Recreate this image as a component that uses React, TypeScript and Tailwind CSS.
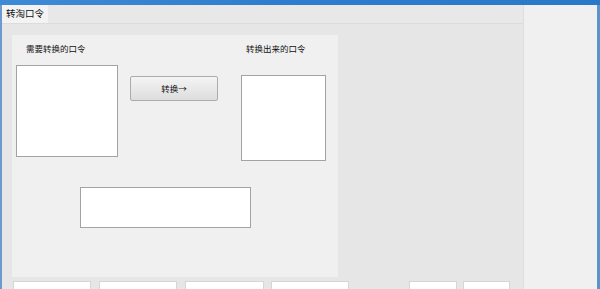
export default function App() {
  const font = { fontFamily: '"Noto Sans CJK SC", "Noto Sans", sans-serif' };
  const bottomBoxes = [
    { w: 78, ml: 11 },
    { w: 78, ml: 8 },
    { w: 79, ml: 8 },
    { w: 78, ml: 7 },
    { w: 48, ml: 60 },
    { w: 47, ml: 6 },
  ];

  return (
    <div
      className="w-[600px] h-[289px] overflow-hidden flex flex-col bg-[#e6e6e6] text-[#111]"
      style={font}
    >
      {/* window frame top */}
      <div className="h-[5px] shrink-0 bg-gradient-to-r from-[#3f8ad6] via-[#2d7ccd] to-[#2a79c9]" />

      <div className="flex flex-1 min-h-0 border-l-2 border-l-[#6b9bcc] border-r-[3px] border-r-[#5d93c9]">
        {/* main area */}
        <div className="w-[521px] shrink-0 flex flex-col">
          {/* tab strip */}
          <div className="h-[19px] shrink-0 flex border-b border-[#dcdcdc] bg-[#e8e8e8]">
            <div className="w-[46px] bg-[#f3f3f3] flex items-center pl-[4px] text-[9.5px] leading-none">
              转淘口令
            </div>
          </div>

          <div className="flex-1 flex flex-col pt-[11px]">
            {/* panel */}
            <div className="ml-[10px] w-[326px] h-[242px] shrink-0 bg-[#f0f0f0] flex flex-col">
              <div className="flex items-start pt-[8px]">
                <div className="ml-[4px] w-[102px] flex flex-col">
                  <div className="pl-[10px] text-[8.5px] leading-[10px]">需要转换的口令</div>
                  <div className="mt-[12px] h-[92px] bg-white border border-[#a3a3a3]" />
                </div>
                <button className="ml-[12px] mt-[33px] w-[88px] h-[25px] rounded-[2px] border border-[#acacac] bg-gradient-to-b from-[#f4f4f4] to-[#dddddd] text-[8.5px] leading-none flex items-center justify-center">
                  转换→
                </button>
                <div className="ml-[23px] w-[85px] flex flex-col">
                  <div className="pl-[5px] text-[8.5px] leading-[10px]">转换出来的口令</div>
                  <div className="mt-[22px] h-[86px] bg-white border border-[#a3a3a3]" />
                </div>
              </div>
              <div className="ml-[68px] mt-[26px] w-[171px] h-[41px] bg-white border border-[#a3a3a3]" />
            </div>

            {/* next row of boxes */}
            <div className="flex mt-[4px]">
              {bottomBoxes.map((b, i) => (
                <div
                  key={i}
                  className="h-[10px] bg-white border-t border-x border-[#d6d6d6]"
                  style={{ width: b.w, marginLeft: b.ml }}
                />
              ))}
            </div>
          </div>
        </div>

        {/* right column */}
        <div className="flex-1 bg-[#f0f0f0] border-l border-[#dedede]" />
      </div>
    </div>
  );
}
